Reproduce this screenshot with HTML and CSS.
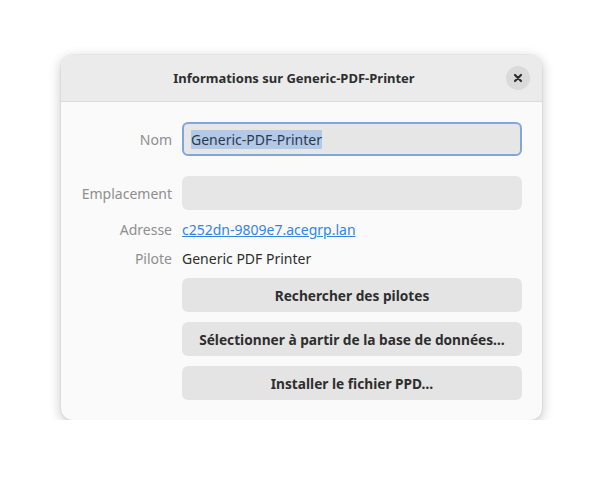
FILE: index.html
```html
<!DOCTYPE html>
<html lang="fr">
<head>
    <meta charset="UTF-8">
    <title>Informations sur Generic-PDF-Printer</title>
    <link rel="stylesheet" href="styles.css">
</head>
<body>
    <div class="window">
        <div class="headerbar">
            <h1 class="title">Informations sur Generic-PDF-Printer</h1>
            <button class="close" title="Fermer">
                <svg width="10" height="10" viewBox="0 0 10 10">
                    <path d="M2 2 L8 8 M8 2 L2 8" stroke="#2e2e2e" stroke-width="2.2" stroke-linecap="round"/>
                </svg>
            </button>
        </div>
        <div class="content">
            <div class="form">
                <label class="label">Nom</label>
                <div class="entry focus"><span class="selected">Generic-PDF-Printer</span></div>

                <label class="label spaced">Emplacement</label>
                <div class="entry spaced"></div>

                <span class="label">Adresse</span>
                <a class="value link" href="#">c252dn-9809e7.acegrp.lan</a>

                <span class="label">Pilote</span>
                <span class="value">Generic PDF Printer</span>

                <span></span>
                <div class="buttons">
                    <button class="btn">Rechercher des pilotes</button>
                    <button class="btn">Sélectionner à partir de la base de données…</button>
                    <button class="btn">Installer le fichier PPD…</button>
                </div>
            </div>
        </div>
    </div>
</body>
</html>
```

FILE: styles.css
```css
body {
    margin: 0;
    background: #fff;
    font-family: "Noto Sans", "Open Sans", sans-serif;
    font-size: 14px;
    color: #2e2e2e;
}
.window {
    width: 481px;
    height: 365px;
    margin: 55px 0 0 61px;
    background: #fafafa;
    border-radius: 12px;
    box-shadow: 0 3px 12px 1px rgba(0, 0, 0, 0.2), 0 0 0 1px rgba(0, 0, 0, 0.04);
    overflow: hidden;
}
.headerbar {
    height: 46px;
    display: flex;
    align-items: center;
    padding: 0 12px 0 21px;
    background: #ebebeb;
    border-bottom: 1px solid #dadada;
}
.title {
    flex: 1;
    margin: 0;
    text-align: center;
    font-size: 13px;
    font-weight: bold;
    color: #2e2e2e;
}
.close {
    width: 24px;
    height: 24px;
    padding: 0;
    border: none;
    border-radius: 50%;
    background: #dadada;
    display: flex;
    align-items: center;
    justify-content: center;
}
.content {
    padding: 20px;
}
.form {
    display: grid;
    grid-template-columns: 91px 340px;
    column-gap: 10px;
    row-gap: 10px;
    align-items: center;
}
.label {
    text-align: right;
    color: #8f8f8f;
}
.spaced {
    margin-top: 10px;
}
.entry {
    height: 34px;
    box-sizing: border-box;
    border-radius: 6px;
    background: #e6e6e6;
    padding: 0 9px;
    display: flex;
    align-items: center;
}
.entry.focus {
    border: 2px solid #80a6db;
    padding: 0 7px;
}
.selected {
    background: #b3c9e8;
    color: #2c3a4d;
}
.value {
    line-height: 19px;
}
.link {
    color: #3584e4;
}
.buttons {
    display: flex;
    flex-direction: column;
    gap: 10px;
}
.btn {
    height: 34px;
    border: none;
    border-radius: 6px;
    background: #e4e4e4;
    font-family: inherit;
    font-size: 13.7px;
    font-weight: bold;
    color: #2e2e2e;
}
```
